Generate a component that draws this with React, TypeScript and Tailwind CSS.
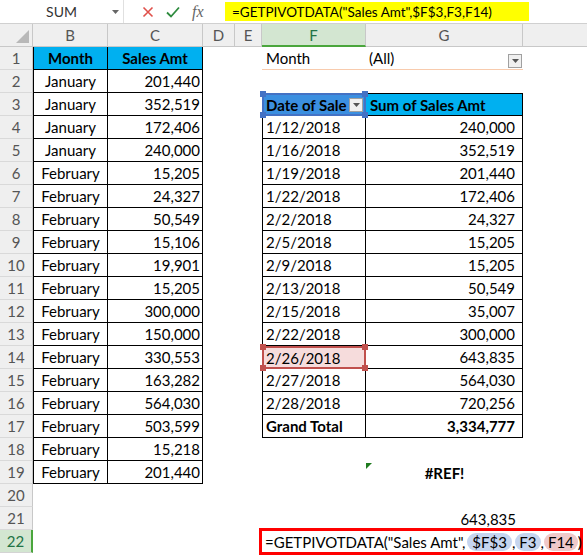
import React from 'react';

const grid = 'grid grid-cols-[33px_75px_95px_32px_27px_104px_157px_1fr] grid-rows-[23px]';

const leftData: [string, string][] = [
  ['January', '201,440'],
  ['January', '352,519'],
  ['January', '172,406'],
  ['January', '240,000'],
  ['February', '15,205'],
  ['February', '24,327'],
  ['February', '50,549'],
  ['February', '15,106'],
  ['February', '19,901'],
  ['February', '15,205'],
  ['February', '300,000'],
  ['February', '150,000'],
  ['February', '330,553'],
  ['February', '163,282'],
  ['February', '564,030'],
  ['February', '503,599'],
  ['February', '15,218'],
  ['February', '201,440'],
];

const pivotData: [string, string][] = [
  ['1/12/2018', '240,000'],
  ['1/16/2018', '352,519'],
  ['1/19/2018', '201,440'],
  ['1/22/2018', '172,406'],
  ['2/2/2018', '24,327'],
  ['2/5/2018', '15,205'],
  ['2/9/2018', '15,205'],
  ['2/13/2018', '50,549'],
  ['2/15/2018', '35,007'],
  ['2/22/2018', '300,000'],
  ['2/26/2018', '643,835'],
  ['2/27/2018', '564,030'],
  ['2/28/2018', '720,256'],
];

function Handles({ color }: { color: string }) {
  return (
    <>
      <span className={`absolute -left-[4px] -top-[4px] w-[6px] h-[6px] ${color}`} />
      <span className={`absolute -right-[4px] -top-[4px] w-[6px] h-[6px] ${color}`} />
      <span className={`absolute -left-[4px] -bottom-[4px] w-[6px] h-[6px] ${color}`} />
      <span className={`absolute -right-[4px] -bottom-[4px] w-[6px] h-[6px] ${color}`} />
    </>
  );
}

function DropButton() {
  return (
    <span className="flex items-center justify-center w-[14px] h-[14px] border border-[#a0a0a0] bg-[#f0f0f0]">
      <svg width="7" height="4" viewBox="0 0 7 4"><path d="M0 0h7L3.5 4z" fill="#555" /></svg>
    </span>
  );
}

function RowHead({ n, active }: { n: number; active?: boolean }) {
  return active ? (
    <div className="flex items-center justify-center bg-[#d3e6d1] border-r-2 border-r-[#4aa63c] border-b border-b-[#d4d4d4] text-[#217346] text-[15px]">{n}</div>
  ) : (
    <div className="flex items-center justify-center bg-[#efefef] border-r border-r-[#c8c8c8] border-b border-b-[#d9d9d9] text-[#555] text-[15px]">{n}</div>
  );
}

export default function App() {
  const rows = [];
  for (let r = 1; r <= 22; r++) {
    let b: React.ReactNode = null;
    let c: React.ReactNode = null;
    let f: React.ReactNode = null;
    let g: React.ReactNode = null;

    if (r === 1) {
      b = <div className="flex items-center justify-center bg-[#00b0f0] border-l border-r border-b border-black font-bold">Month</div>;
      c = <div className="flex items-center justify-center bg-[#00b0f0] border-r border-b border-black font-bold">Sales Amt</div>;
    } else if (r <= 19) {
      const [m, v] = leftData[r - 2];
      b = <div className="flex items-center justify-center border-l border-r border-b border-black">{m}</div>;
      c = <div className="flex items-center justify-end pr-[2px] border-r border-b border-black">{v}</div>;
    } else {
      b = <div />;
      c = <div />;
    }

    if (r === 1) {
      f = <div className="flex items-center pl-[4px] border-b border-[#f8cbad]">Month</div>;
      g = (
        <div className="flex items-center justify-between pl-[3px] pr-[1px] border-b border-[#f8cbad]">
          <span>(All)</span>
          <span className="mt-[5px]"><DropButton /></span>
        </div>
      );
    } else if (r === 3) {
      f = (
        <div className="relative flex items-center pl-[2px] bg-[#3b8fe0] border-2 border-[#4472c4] font-bold whitespace-nowrap">
          <span>Date of Sale</span>
          <span className="absolute right-[1px] top-[3px]"><DropButton /></span>
          <Handles color="bg-[#4472c4]" />
        </div>
      );
      g = <div className="flex items-center pl-[4px] bg-[#00b0f0] border-t border-r border-b border-black font-bold">Sum of Sales Amt</div>;
    } else if (r >= 4 && r <= 16) {
      const [d, v] = pivotData[r - 4];
      if (r === 14) {
        f = (
          <div className="relative flex items-center pl-[2px] bg-[#f6dcdc] border-2 border-[#c0504d]">
            {d}
            <Handles color="bg-[#c0504d]" />
          </div>
        );
      } else {
        f = <div className="flex items-center pl-[3px] border-l border-r border-b border-black">{d}</div>;
      }
      g = <div className="flex items-center justify-end pr-[7px] border-r border-b border-black">{v}</div>;
    } else if (r === 17) {
      f = <div className="flex items-center pl-[3px] border-l border-r border-b border-black font-bold">Grand Total</div>;
      g = <div className="flex items-center justify-end pr-[7px] border-r border-b border-black font-bold">3,334,777</div>;
    } else if (r === 19) {
      f = <div />;
      g = (
        <div className="relative flex items-center justify-center font-bold">
          #REF!
          <svg className="absolute left-0 top-[2px]" width="6" height="6" viewBox="0 0 6 6"><path d="M0 0h6L0 6z" fill="#1e7b1e" /></svg>
        </div>
      );
    } else if (r === 21) {
      f = <div />;
      g = <div className="flex items-center justify-end pr-[7px]">643,835</div>;
    } else if (r === 22) {
      f = (
        <div className="relative">
          <div className="absolute -left-[3px] -top-[2px] w-[324px] h-[27px] border-[3px] border-[#ff0000] bg-white flex items-center pl-[3px] whitespace-nowrap text-[15px]">
            <span>=GETPIVOTDATA("Sales Amt",</span>
            <span className="rounded-full bg-[#c6d5ef] px-[5px] ml-[2px]">$F$3</span>
            <span>,</span>
            <span className="rounded-full bg-[#c6d5ef] px-[4px]">F3</span>
            <span>,</span>
            <span className="rounded-full bg-[#efc9c9] px-[4px]">F14</span>
            <span>)</span>
            <span className="w-px h-[19px] bg-black ml-[1px]" />
          </div>
        </div>
      );
      g = <div />;
    } else {
      f = <div />;
      g = <div />;
    }

    rows.push(
      <div key={r} className={`${grid} h-[23px]`}>
        <RowHead n={r} active={r === 22} />
        {b}
        {c}
        <div />
        <div />
        {f}
        {g}
        <div />
      </div>
    );
  }

  return (
    <div className="w-[587px] h-[556px] overflow-hidden bg-white text-[15px] leading-[18px] text-black" style={{ fontFamily: 'Lato, "Open Sans", sans-serif' }}>
      {/* formula bar */}
      <div className="flex items-center h-[24px] border-b border-[#d0d0d0]">
        <div className="relative flex items-center justify-center w-[124px] h-full border-r border-[#e0e0e0] text-[14px] text-[#333]">
          SUM
          <svg className="absolute right-[4px] top-[10px]" width="7" height="4" viewBox="0 0 7 4"><path d="M0 0h7L3.5 4z" fill="#666" /></svg>
        </div>
        <div className="flex items-center w-[101px] pl-[18px] gap-[12px]">
          <svg width="12" height="12" viewBox="0 0 12 12"><path d="M1.5 1.5l9 9M10.5 1.5l-9 9" stroke="#e0504a" strokeWidth="1.6" /></svg>
          <svg width="14" height="12" viewBox="0 0 14 12"><path d="M1 6.5l4 4L13 1.5" stroke="#2e8b3e" strokeWidth="1.8" fill="none" /></svg>
          <span className="italic text-[#666] text-[16px]" style={{ fontFamily: '"Liberation Serif", serif' }}>fx</span>
        </div>
        <div className="flex items-center h-[19px] w-[304px] bg-[#ffff00] pl-[7px] text-[13.5px] whitespace-nowrap">
          =GETPIVOTDATA("Sales Amt",$F$3,F3,F14)
        </div>
      </div>
      {/* column headers */}
      <div className={`${grid} h-[23px] bg-[#efefef] text-[15px] text-[#555]`}>
        <div className="relative border-r border-b border-[#c8c8c8]">
          <svg className="absolute right-[3px] bottom-[3px]" width="13" height="13" viewBox="0 0 13 13"><path d="M13 0v13H0z" fill="#b8b8b8" /></svg>
        </div>
        {['B', 'C', 'D', 'E'].map((l) => (
          <div key={l} className="flex items-center justify-center border-r border-b border-[#c8c8c8]">{l}</div>
        ))}
        <div className="flex items-center justify-center bg-[#d3e6d1] border-r border-[#c8c8c8] border-b-2 border-b-[#4aa63c] text-[#217346]">F</div>
        <div className="flex items-center justify-center border-r border-b border-[#c8c8c8]">G</div>
        <div className="border-b border-[#c8c8c8]" />
      </div>
      {rows}
    </div>
  );
}
